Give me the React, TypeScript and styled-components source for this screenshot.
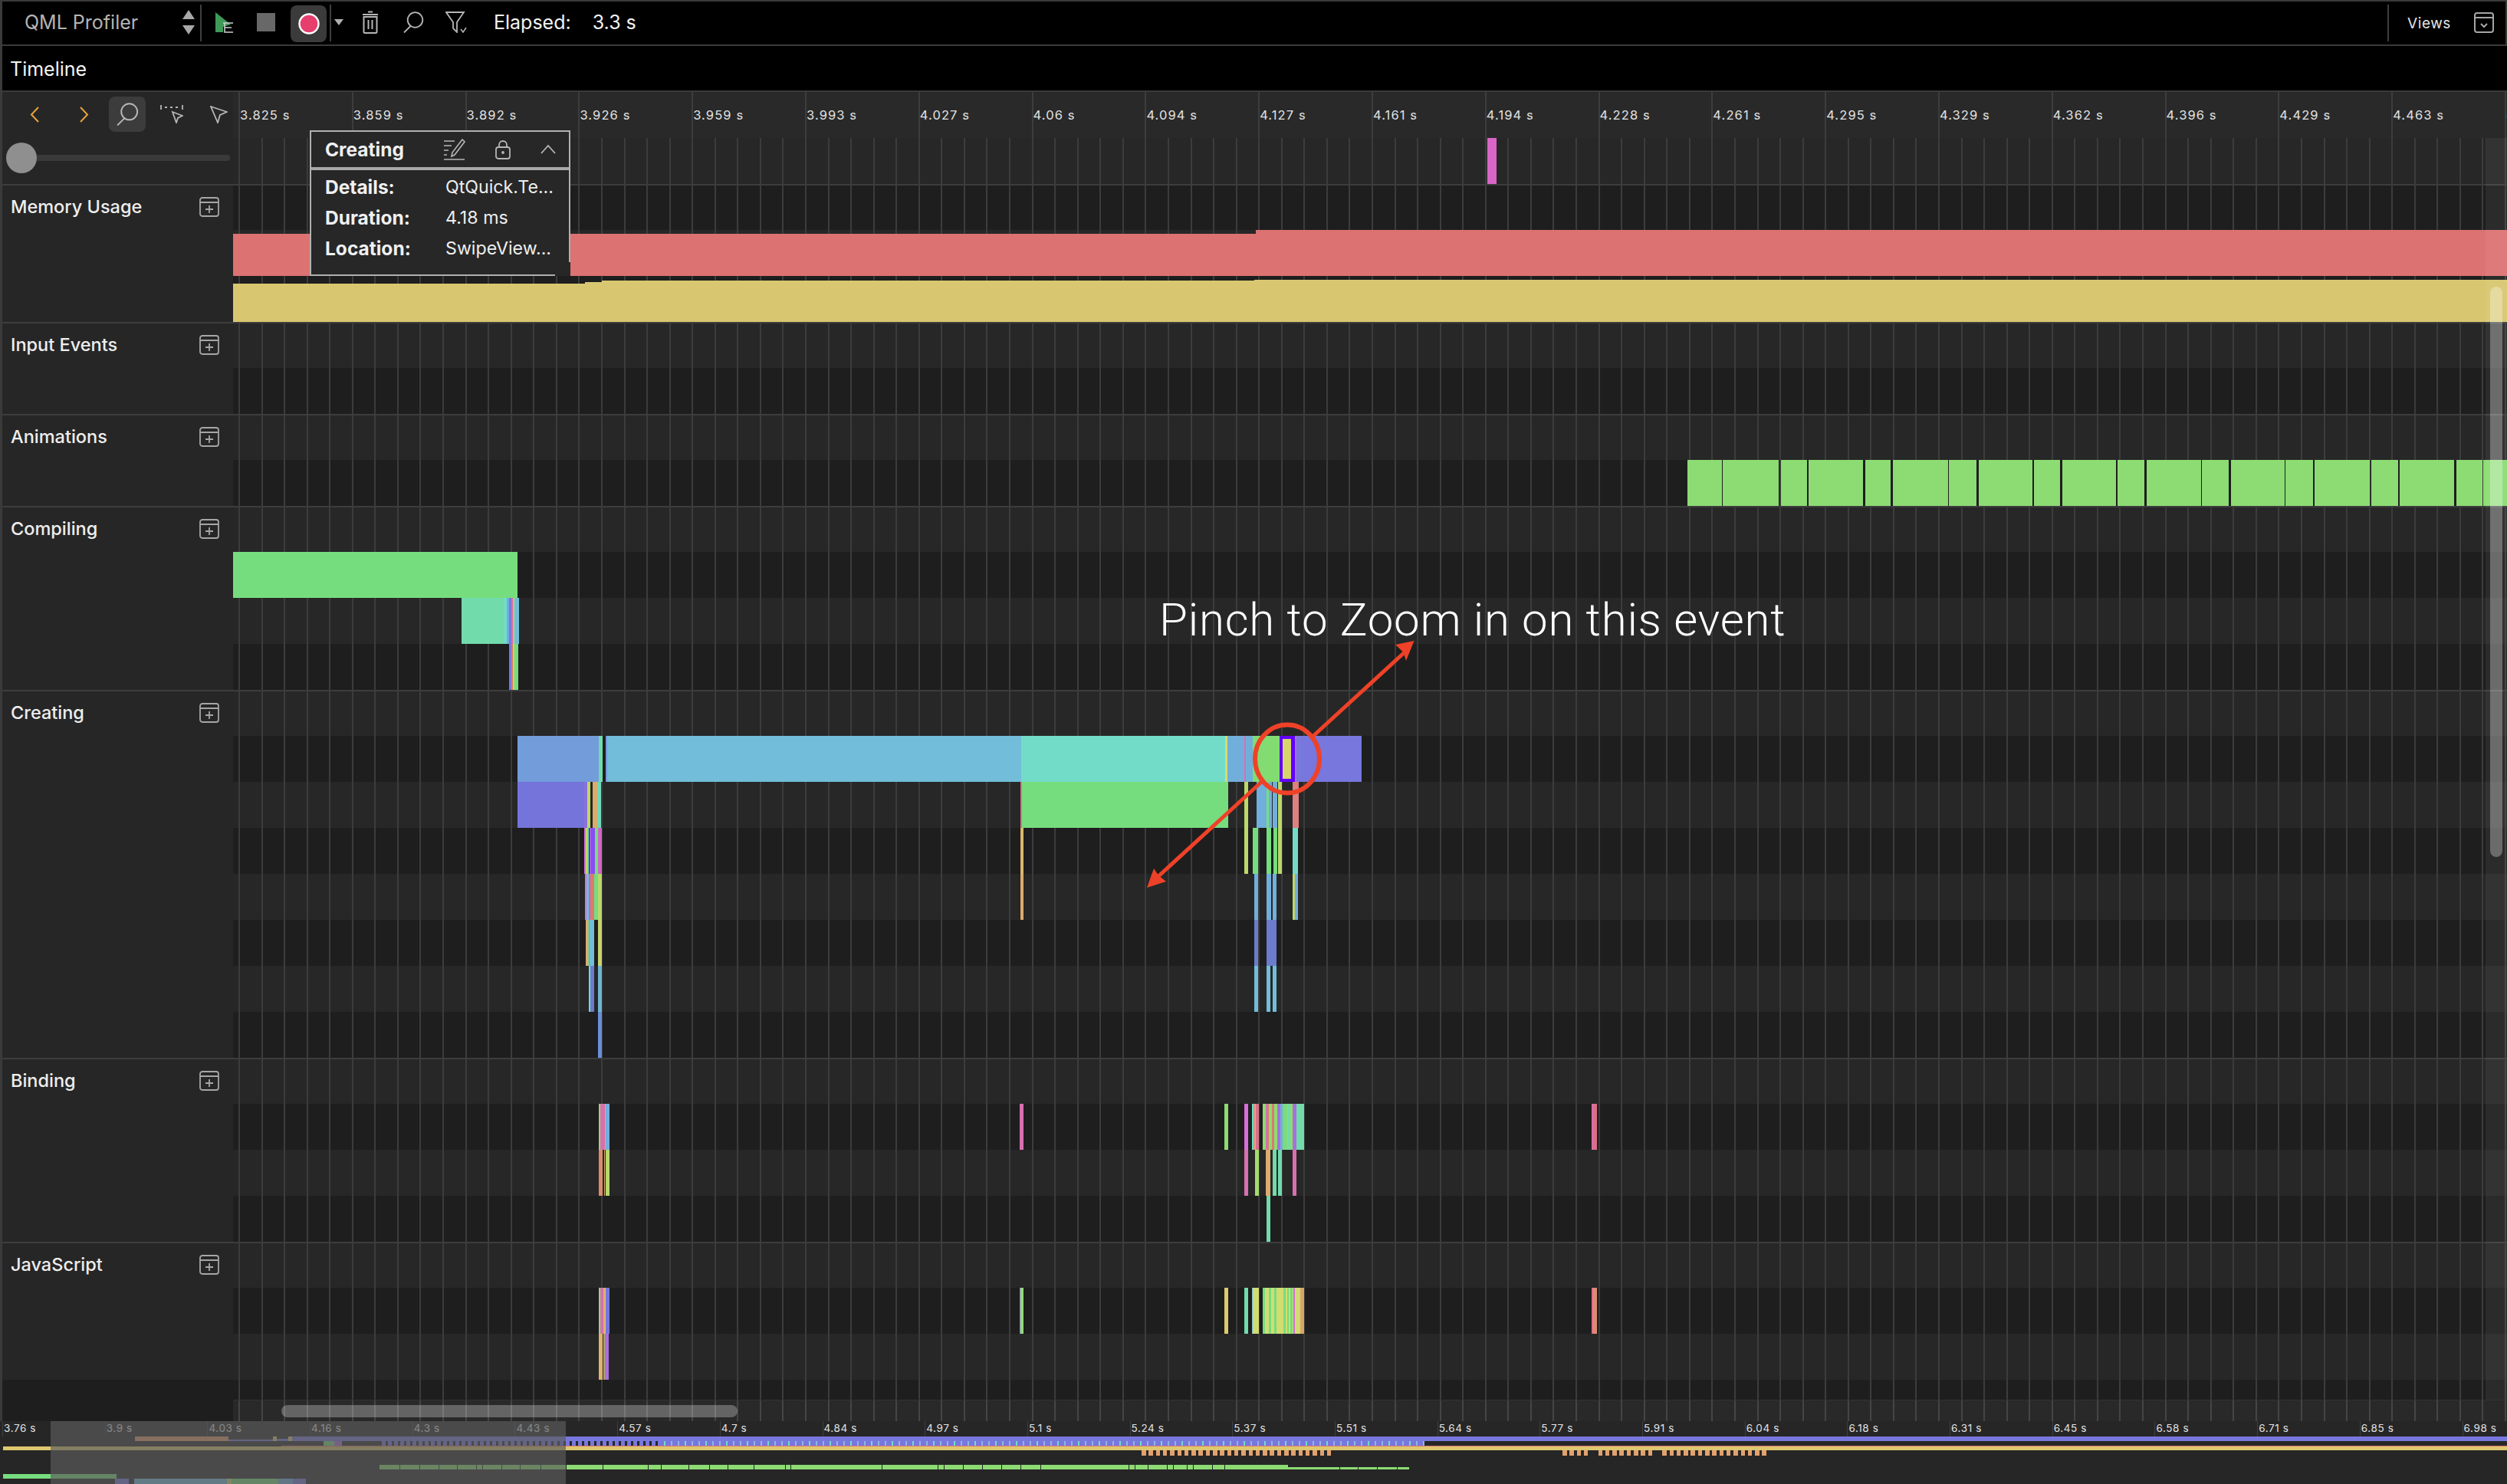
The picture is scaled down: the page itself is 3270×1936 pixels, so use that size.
import styled, { createGlobalStyle } from 'styled-components';

type Bar = { x: number; w: number; y: number; h: number; color: string };
type Span = [number, number, string];

const ROW = 60;

// turns [from, to, colour] spans into bars of one 60px row
const lane = (row: number, spans: Span[]): Bar[] =>
  spans.map(([from, to, color]) => ({ x: from, w: to - from, y: row * ROW, h: ROW, color }));

const C = {
  green: '#76dd7e',
  lime: '#8cdc73',
  mint: '#72dbab',
  teal: '#72dcc8',
  sky: '#72bdd9',
  blue: '#72aedb',
  steel: '#739cda',
  purple: '#7777dd',
  violet: '#a96fdc',
  pink: '#d870b0',
  magenta: '#d86ed8',
  coral: '#dc7a6f',
  rose: '#dc6e8a',
  orange: '#dcac6e',
  yellow: '#d3dc70',
  olive: '#bcd86b',
};

const memoryBars: Bar[] = [
  { x: 304, w: 1334, y: 65, h: 55, color: '#dc7271' },
  { x: 1638, w: 1632, y: 60, h: 60, color: '#dc7271' },
  { x: 304, w: 459, y: 130, h: 50, color: '#d8c770' },
  { x: 763, w: 22, y: 128, h: 52, color: '#d8c770' },
  { x: 785, w: 851, y: 126, h: 54, color: '#d8c770' },
  { x: 1636, w: 1634, y: 125, h: 55, color: '#d8c770' },
];

const animationCuts: [number, number][] = [
  [95, 1], [201, 3], [254, 2], [360, 3], [412, 3], [519, 1], [572, 3], [677, 2], [730, 3], [835, 2],
  [887, 3], [994, 1], [1046, 3], [1151, 1], [1204, 2], [1310, 2], [1363, 2], [1469, 3], [1522, 1],
];

const animationBars: Bar[] = (() => {
  const bars: Bar[] = [];
  let from = 2201;
  animationCuts.forEach(([at, gap]) => {
    const to = 2180 + at / 1.4385;
    bars.push({ x: from, w: to - from, y: ROW, h: ROW, color: C.lime });
    from = to + gap;
  });
  bars.push({ x: from, w: 3270 - from, y: ROW, h: ROW, color: C.lime });
  return bars;
})();

const compilingBars: Bar[] = [
  ...lane(1, [[304, 675, C.green]]),
  ...lane(2, [
    [602, 657, C.mint], [657, 661, C.teal], [661, 664, C.blue], [664, 667, C.purple],
    [667, 669, C.pink], [669, 670, C.orange], [670, 671, C.olive], [671, 677, C.sky],
  ]),
  ...lane(3, [[664, 667, C.purple], [667, 669, C.coral], [669, 671, C.olive], [671, 676, C.green]]),
];

const creatingBars: Bar[] = [
  ...lane(1, [
    [675, 781, C.steel], [781, 786, C.mint], [790, 792, C.steel], [792, 1332, C.sky], [1332, 1598, C.teal],
    [1598, 1601, C.yellow], [1601, 1623, C.blue], [1623, 1625, C.pink], [1625, 1634, C.blue],
    [1634, 1669, '#82dc72'], [1669, 1689, '#6200ff'], [1689, 1691, C.violet], [1691, 1776, C.purple],
  ]),
  { x: 1673, w: 11, y: 64, h: 52, color: '#d8d66b' },
  ...lane(2, [
    [675, 762, '#7474db'], [762, 766, '#8c70d8'], [766, 770, C.olive], [773, 779, '#d9ac6c'], [779, 784, '#6fd9ba'],
    [1332, 1602, C.green], [1331, 1333, C.rose],
    [1623, 1628, C.olive], [1639, 1652, C.blue], [1652, 1655, C.green], [1655, 1659, C.blue], [1660, 1666, C.blue],
    [1667, 1672, C.olive], [1686, 1694, '#dc8080'],
  ]),
  ...lane(3, [
    [762, 764, C.magenta], [764, 766, C.olive], [766, 768, C.teal], [769, 770, C.pink], [770, 776, '#8a4df5'],
    [776, 780, C.green], [780, 785, '#cf66c5'], [1331, 1335, '#d8b86c'],
    [1623, 1628, C.olive], [1634, 1641, C.green], [1652, 1658, C.green], [1661, 1666, C.green], [1667, 1672, C.olive],
    [1686, 1693, C.teal],
  ]),
  ...lane(4, [
    [763, 765, C.magenta], [765, 768, C.sky], [768, 770, C.violet], [770, 775, C.coral], [775, 780, C.green],
    [780, 785, C.olive], [1331, 1335, C.orange], [1636, 1641, C.blue], [1652, 1658, C.blue], [1660, 1665, C.blue],
    [1686, 1689, C.olive], [1689, 1693, C.blue],
  ]),
  ...lane(5, [
    [764, 766, C.orange], [766, 768, C.green], [768, 769, C.magenta], [769, 775, C.sky], [780, 785, '#c8d46c'],
    [1636, 1641, '#6b7ccc'], [1652, 1665, '#6b7ccc'],
  ]),
  ...lane(6, [
    [768, 770, C.teal], [770, 775, '#6b7ccc'], [780, 785, '#6fb5d4'],
    [1636, 1641, C.sky], [1652, 1657, C.sky], [1660, 1665, C.sky],
  ]),
  ...lane(7, [[780, 785, '#6b8fd8']]),
];

const bindingBars: Bar[] = [
  ...lane(1, [
    [781, 783, C.lime], [783, 789, C.pink], [789, 790, C.orange], [790, 795, C.blue], [1330, 1335, C.pink],
    [1597, 1602, C.lime], [1623, 1628, C.magenta], [1633, 1635, C.teal], [1635, 1636, C.pink],
    [1636, 1638, C.orange], [1638, 1642, C.rose], [1647, 1651, C.lime], [1651, 1653, C.pink], [1653, 1655, C.coral],
    [1655, 1659, C.lime], [1659, 1662, C.coral], [1662, 1666, C.lime], [1666, 1670, C.violet], [1670, 1673, C.blue],
    [1673, 1678, C.green], [1678, 1680, C.lime], [1680, 1683, C.mint], [1683, 1686, C.lime], [1686, 1691, C.violet],
    [1691, 1701, C.mint], [2076, 2077, C.magenta], [2077, 2083, C.rose],
  ]),
  ...lane(2, [
    [781, 786, '#dc8c6e'], [787.5, 789, C.orange], [790, 795, '#b5d86a'], [1623, 1628, C.pink], [1637, 1642, '#a6dc6e'],
    [1651, 1657, C.orange], [1660, 1665, C.mint], [1667, 1672, C.mint], [1686, 1691, C.pink],
  ]),
  ...lane(3, [[1652, 1657, C.mint]]),
];

const jsBars: Bar[] = [
  ...lane(1, [
    [781, 783, C.lime], [783, 787, C.pink], [787, 789, C.orange], [789, 790, C.olive], [790, 795, C.purple],
    [1330, 1331, C.violet], [1331, 1335, C.lime], [1597, 1602, '#dccb6e'], [1623, 1628, C.mint], [1633, 1634, C.sky],
    [1634, 1642, C.yellow], [1647, 1650, C.green], [1650, 1655, C.yellow], [1655, 1657.5, C.green],
    [1657.5, 1662, C.yellow], [1662, 1665, C.green], [1665, 1674, C.yellow], [1674, 1677, C.green],
    [1677, 1679, C.yellow], [1679, 1681, C.green], [1681, 1682.5, C.yellow], [1682.5, 1686, C.green],
    [1686, 1687, C.yellow], [1687, 1689, C.magenta], [1689, 1696, C.yellow], [1696, 1701, '#d8a56a'],
    [2076, 2078, C.rose], [2078, 2083, '#dc8c6e'],
  ]),
  ...lane(2, [[781, 786, '#dcb56e'], [787, 789, '#b0a06a'], [789, 794, C.violet]]),
];

const rulerLabels = [
  '3.825', '3.859', '3.892', '3.926', '3.959', '3.993', '4.027', '4.06', '4.094', '4.127', '4.161',
  '4.194', '4.228', '4.261', '4.295', '4.329', '4.362', '4.396', '4.429', '4.463', '4.496',
];

const overviewLabels = [
  '3.76', '3.9', '4.03', '4.16', '4.3', '4.43', '4.57', '4.7', '4.84', '4.97', '5.1', '5.24', '5.37',
  '5.51', '5.64', '5.77', '5.91', '6.04', '6.18', '6.31', '6.45', '6.58', '6.71', '6.85', '6.98',
];

// overview chart, y is counted from its top edge at 1874
const overviewBars: Bar[] = (() => {
  const bars: Bar[] = [
    { x: 176, w: 122, y: 0, h: 6, color: '#e09a6a' },
    { x: 298, w: 58, y: 4, h: 2, color: C.purple },
    { x: 356, w: 5, y: 0, h: 6, color: '#dec86f' },
    { x: 361, w: 15, y: 3, h: 3, color: C.purple },
    { x: 376, w: 5, y: 0, h: 6, color: '#dec86f' },
    { x: 381, w: 2889, y: 0, h: 6, color: C.purple },
    { x: 422, w: 14, y: 6, h: 6, color: C.green },
    { x: 436, w: 10, y: 6, h: 6, color: C.violet },
    { x: 861, w: 996, y: 6, h: 6, color: C.purple },
    { x: 367, w: 2903, y: 12, h: 1, color: '#dc7271' },
    { x: 4, w: 3266, y: 13, h: 5, color: '#dec86f' },
    { x: 4, w: 148, y: 49, h: 6, color: C.green },
    { x: 150, w: 18, y: 55, h: 7, color: C.purple },
    { x: 175, w: 121, y: 55, h: 7, color: C.sky },
    { x: 296, w: 6, y: 55, h: 7, color: C.yellow },
    { x: 302, w: 61, y: 55, h: 7, color: C.green },
    { x: 363, w: 19, y: 55, h: 7, color: C.blue },
    { x: 382, w: 17, y: 55, h: 7, color: C.purple },
    { x: 495, w: 1185, y: 37, h: 6, color: C.lime },
    { x: 1680, w: 158, y: 40, h: 3, color: C.lime },
  ];
  for (let x = 498; x < 861; x += 8) bars.push({ x, w: 5, y: 6, h: 6, color: C.purple });
  let stripe = 0;
  for (let x = 866; x < 1857; x += 9) {
    bars.push({ x, w: 2, y: 6, h: 6, color: stripe % 3 === 0 ? C.teal : '#8fb5e0' });
    stripe += 1;
  }
  const orange = '#e2a16e';
  for (let x = 1489; x < 1738; x += 9.3) bars.push({ x, w: 5.5, y: 18, h: 7, color: orange });
  for (let x = 2038; x < 2300; x += 9.3) {
    if ((x > 2074 && x < 2080) || (x > 2155 && x < 2163)) continue;
    bars.push({ x, w: 5.5, y: 18, h: 7, color: orange });
  }
  [
    521, 547, 572, 596, 621, 629, 654, 678, 705, 738, 786, 845, 862, 898, 925, 949, 983, 1024, 1031, 1150, 1223, 1231,
    1256, 1281, 1306, 1331, 1357, 1472, 1480, 1497, 1522, 1530, 1548, 1556, 1581, 1597, 1747, 1771, 1796, 1822,
  ].forEach((x) => bars.push({ x, w: 1, y: 37, h: 6, color: '#262626' }));
  return bars;
})();

const GlobalStyle = createGlobalStyle`
  html, body {
    margin: 0;
    padding: 0;
    background: #000;
  }
  body {
    font-family: Inter, "Liberation Sans", sans-serif;
    color: #e8e8e8;
  }
`;

const Page = styled.div`
  position: relative;
  width: 3270px;
  height: 1936px;
  overflow: hidden;
  background: #000;
  display: flex;
  flex-direction: column;
`;

const Toolbar = styled.header`
  box-sizing: border-box;
  height: 60px;
  display: flex;
  align-items: center;
  background: #000;
  border-top: 2px solid #3a3a3a;
  border-left: 3px solid #3a3a3a;
  border-right: 2px solid #3a3a3a;
  border-bottom: 2px solid #3a3a3a;
  padding-bottom: 2px;
`;

const ComboText = styled.span`
  margin-left: 29px;
  width: 205px;
  font-size: 25px;
  color: #b4b4b4;
`;

const Divider = styled.span`
  flex: none;
  width: 2px;
  height: 48px;
  margin-top: 2px;
  background: #3e3e3e;
`;

const Cell = styled.span<{ $w: number }>`
  flex: none;
  width: ${(p) => p.$w}px;
  display: flex;
  align-items: center;
  justify-content: center;
`;

const RecordButton = styled.span`
  flex: none;
  width: 47px;
  height: 48px;
  margin: 4px 4px 0 6px;
  border-radius: 8px;
  background: #3b3b3b;
  display: flex;
  align-items: center;
  justify-content: center;
`;

const ElapsedText = styled.span<{ $gap: number }>`
  margin-left: ${(p) => p.$gap}px;
  font-size: 25px;
  color: #f2f2f2;
  white-space: nowrap;
`;

const ToolbarFill = styled.span`
  flex: 1;
`;

const ViewsText = styled.span`
  margin: 2px 30px 0 24px;
  font-size: 19px;
  letter-spacing: 0.6px;
  color: #e4e4e4;
`;

const ViewsIcon = styled.span`
  display: flex;
  margin-right: 15px;
`;

const TitleBar = styled.div`
  box-sizing: border-box;
  height: 60px;
  padding: 2px 0 0 10px;
  display: flex;
  align-items: center;
  background: #000;
  border-left: 3px solid #3a3a3a;
  border-bottom: 2px solid #3a3a3a;
  font-size: 25px;
  color: #f4f4f4;
`;

const Timeline = styled.main`
  flex: none;
  height: 1734px;
  display: flex;
  flex-direction: column;
  box-sizing: border-box;
  border-left: 3px solid #3a3a3a;
`;

const HeaderRow = styled.div`
  flex: none;
  height: 120px;
  display: flex;
`;

const Controls = styled.div`
  flex: none;
  width: 301px;
  background: #262626;
  display: flex;
  flex-direction: column;
`;

const NavRow = styled.div`
  height: 60px;
  display: flex;
  align-items: center;
`;

const NavCell = styled.span<{ $w: number; $active?: boolean }>`
  flex: none;
  width: ${(p) => p.$w}px;
  height: 46px;
  margin-top: -2px;
  display: flex;
  align-items: center;
  justify-content: center;
  border-radius: 8px;
  background: ${(p) => (p.$active ? '#3c3c3c' : 'transparent')};
`;

const SliderRow = styled.div`
  height: 60px;
  padding: 0 0 8px 5px;
  box-sizing: border-box;
  display: flex;
  align-items: center;
`;

const SliderThumb = styled.span`
  flex: none;
  width: 40px;
  height: 40px;
  border-radius: 50%;
  background: #8f8f8f;
`;

const SliderTrack = styled.span`
  flex: none;
  width: 252px;
  height: 8px;
  border-radius: 0 4px 4px 0;
  background: #3a3a3a;
`;

const HeaderRight = styled.div`
  flex: 1;
  min-width: 0;
  display: flex;
  flex-direction: column;
`;

const Ruler = styled.div`
  height: 60px;
  padding-left: 7px;
  display: flex;
  overflow: hidden;
  background: #292929;
`;

const RulerTick = styled.span`
  flex: none;
  box-sizing: border-box;
  width: 147.8px;
  padding: 20px 0 0 0;
  border-left: 2px solid #3d3d3d;
  font-size: 16.5px;
  line-height: 20px;
  letter-spacing: 1.1px;
  white-space: nowrap;
  color: #e2e2e2;
`;

const gridLines =
  'repeating-linear-gradient(90deg, #3c3c3c 7px, #3c3c3c 9px, transparent 9px, transparent 36.56px)';

const Lane = styled.div<{ $startDark?: boolean; $flat?: boolean }>`
  flex: 1;
  min-width: 0;
  background-image: ${gridLines},
    ${(p) =>
      p.$flat
        ? 'linear-gradient(#1e1e1e, #1e1e1e)'
        : p.$startDark
          ? 'repeating-linear-gradient(180deg, #1e1e1e 0 60px, #272727 60px 120px)'
          : 'repeating-linear-gradient(180deg, #272727 0 60px, #1e1e1e 60px 120px)'};
`;

const Chart = styled.svg`
  display: block;
`;

const SectionRow = styled.section<{ $rows: number }>`
  position: relative;
  flex: none;
  height: ${(p) => p.$rows * ROW}px;
  display: flex;

  &::after {
    content: '';
    position: absolute;
    top: 0;
    left: 0;
    right: 0;
    height: 2px;
    background: #3d3d3d;
  }
`;

const SectionHead = styled.div`
  flex: none;
  box-sizing: border-box;
  width: 301px;
  height: 100%;
  background: #262626;
`;

const HeadLine = styled.div`
  box-sizing: border-box;
  height: 60px;
  padding: 0 18px 1px 11px;
  display: flex;
  align-items: center;
  justify-content: space-between;
  font-size: 23.5px;
  font-weight: 500;
  color: #eeeeee;
`;

const BottomRow = styled.div`
  flex: 1;
  display: flex;
  background: #1e1e1e;
`;

const BottomHead = styled.div`
  flex: none;
  width: 301px;
`;

const ScrollLane = styled(Lane)`
  display: flex;
  align-items: flex-end;
`;

const HScrollTrack = styled.div`
  flex: 1;
  height: 28px;
  box-sizing: border-box;
  padding: 6px 0 0 63px;
  background: rgba(255, 255, 255, 0.05);
  border-top: 1px solid #333;
`;

const HScrollThumb = styled.div`
  width: 595px;
  height: 16px;
  border-radius: 8px;
  background: rgba(255, 255, 255, 0.28);
`;

const Overview = styled.footer`
  position: relative;
  flex: 1;
  background: #262626;
  display: flex;
  flex-direction: column;
`;

const OverviewRuler = styled.div`
  height: 20px;
  padding-left: 3px;
  display: flex;
  overflow: hidden;
`;

const OverviewTick = styled.span`
  flex: none;
  box-sizing: border-box;
  width: 133.7px;
  padding-left: 1px;
  border-left: 1px solid #3f3f3f;
  font-size: 13.5px;
  line-height: 19px;
  letter-spacing: 0.6px;
  color: #e4e4e4;
`;

const OverviewWindow = styled.div`
  position: absolute;
  left: 66px;
  top: 0;
  bottom: 0;
  width: 672px;
  background: rgba(91, 91, 91, 0.68);
`;

const VScrollTrack = styled.div`
  position: absolute;
  left: 3242px;
  top: 180px;
  width: 28px;
  height: 1646px;
  padding: 194px 0 0 6px;
  box-sizing: border-box;
  background: rgba(255, 255, 255, 0.06);
`;

const VScrollThumb = styled.div`
  width: 16px;
  height: 744px;
  border-radius: 8px;
  background: rgba(255, 255, 255, 0.3);
`;

const Tooltip = styled.aside`
  position: absolute;
  left: 404px;
  top: 170px;
  box-sizing: border-box;
  width: 340px;
  height: 190px;
  background: #272727;
  border: 2px solid #b0b0b0;

  &::after {
    content: '';
    position: absolute;
    right: -2px;
    bottom: -2px;
    width: 20px;
    height: 18px;
    background: #272727;
  }
`;

const TooltipHead = styled.div`
  box-sizing: border-box;
  height: 50px;
  padding: 0 17px 0 18px;
  display: flex;
  align-items: center;
  border-bottom: 4px solid #a8a8a8;
`;

const TooltipTitle = styled.strong`
  flex: none;
  width: 155px;
  font-size: 24.5px;
  font-weight: 700;
  color: #f0f0f0;
`;

const TooltipTools = styled.div`
  flex: 1;
  display: flex;
  align-items: center;
  justify-content: space-between;
`;

const TooltipBody = styled.dl`
  margin: 0;
  padding: 2px 0 0 18px;
  display: grid;
  grid-template-columns: 157px 1fr;
  grid-auto-rows: 40px;
  align-items: center;
`;

const TooltipKey = styled.dt`
  font-size: 24.5px;
  font-weight: 700;
  color: #f0f0f0;
`;

const TooltipValue = styled.dd`
  margin: 0;
  font-size: 23.2px;
  color: #eeeeee;
  white-space: nowrap;
`;

const Annotation = styled.div`
  position: absolute;
  left: 1512px;
  top: 772px;
  font-family: Roboto, sans-serif;
  font-weight: 300;
  font-size: 60px;
  line-height: 74px;
  letter-spacing: 0.75px;
  color: #ffffff;
  white-space: nowrap;
`;

const ArrowLayer = styled.svg`
  position: absolute;
  left: 1480px;
  top: 820px;
`;

const STROKE = '#b6b6b6';

const ComboArrows = () => (
  <svg width="18" height="36" viewBox="0 0 18 36">
    <path d="M9 2 L17 14 H1 Z M9 34 L17 22 H1 Z" fill="#a8a8a8" />
  </svg>
);

const PlayIcon = () => (
  <svg width="26" height="28" viewBox="0 0 26 28">
    <path d="M2 1 L22 17 L12 20 V27 H2 Z" fill="#3f9a57" />
    <path d="M12 15 H25 M14 15 V27 H25 M14 21 H23" fill="none" stroke="#cfcfcf" strokeWidth="1.6" />
  </svg>
);

const StopIcon = () => (
  <svg width="24" height="24" viewBox="0 0 24 24">
    <rect width="24" height="24" fill="#686868" />
  </svg>
);

const RecordIcon = () => (
  <svg width="28" height="28" viewBox="0 0 28 28">
    <circle cx="14" cy="14" r="12.5" fill="#e63e6d" stroke="#ffffff" strokeWidth="2.4" />
  </svg>
);

const DropArrow = () => (
  <svg width="12" height="8" viewBox="0 0 12 8">
    <path d="M0 0 H12 L6 8 Z" fill="#b0b0b0" />
  </svg>
);

const TrashIcon = () => (
  <svg width="22" height="30" viewBox="0 0 22 30" fill="none" stroke={STROKE} strokeWidth="2">
    <path d="M1 5 H21 M8 1.5 H14 M2.5 8 H19.5 V28 Q19.5 29 18 29 H4 Q2.5 29 2.5 28 Z M8.5 12 V24 M13.5 12 V24" />
  </svg>
);

const SearchIcon = ({ size = 28 }: { size?: number }) => (
  <svg width={size} height={size} viewBox="0 0 28 28" fill="none" stroke={STROKE} strokeWidth="1.8">
    <circle cx="16.5" cy="11" r="9.8" />
    <path d="M10.5 19 L2 27.5" />
  </svg>
);

const FilterIcon = () => (
  <svg width="28" height="28" viewBox="0 0 28 28" fill="none" stroke={STROKE} strokeWidth="1.8">
    <path d="M1 1 H24 L15 14 V27 L10 22 V14 Z" />
    <path d="M20 23 L23 27 L27 21" strokeWidth="1.5" />
  </svg>
);

const ViewsGlyph = () => (
  <svg width="26" height="27" viewBox="0 0 26 27" fill="none" stroke="#a6a6a6" strokeWidth="2">
    <rect x="1" y="1" width="24" height="25" rx="3" />
    <path d="M1 7 H25 M9 15 L13 19 L17 15" />
  </svg>
);

const Chevron = ({ dir }: { dir: 'left' | 'right' }) => (
  <svg width="13" height="21" viewBox="0 0 13 21" fill="none" stroke="#e8a33d" strokeWidth="2">
    <path d={dir === 'left' ? 'M11 1 L2 10.5 L11 20' : 'M2 1 L11 10.5 L2 20'} />
  </svg>
);

const RangeIcon = () => (
  <svg width="30" height="24" viewBox="0 0 30 24" fill="none" stroke={STROKE} strokeWidth="1.8">
    <path d="M1 0 V6 M29 0 V6 M6 3 H9 M13 3 H16 M20 3 H23" />
    <path d="M16 9 L29 14 L23 17 L21 23 Z" />
  </svg>
);

const CursorIcon = () => (
  <svg width="23" height="23" viewBox="0 0 23 23" fill="none" stroke={STROKE} strokeWidth="1.8">
    <path d="M1 1 L22 8 L13 12 L10 22 Z" />
  </svg>
);

const ExpandIcon = () => (
  <svg width="26" height="26" viewBox="0 0 26 26" fill="none" stroke="#a6a6a6" strokeWidth="1.8">
    <rect x="1" y="1" width="24" height="24" rx="3" />
    <path d="M1 7 H25 M13 11 V21 M8 16 H18" />
  </svg>
);

const EditIcon = () => (
  <svg width="28" height="28" viewBox="0 0 28 28" fill="none" stroke={STROKE} strokeWidth="1.6">
    <path d="M0 3 H14 M0 9 H10 M0 15 H6 M0 21 H4 M0 27 H27" />
    <path d="M24 1 L27 4 L14 21 L10 23 L11 18 Z" />
  </svg>
);

const LockIcon = () => (
  <svg width="20" height="25" viewBox="0 0 20 25" fill="none" stroke={STROKE} strokeWidth="1.8">
    <rect x="1" y="9" width="18" height="15" rx="3" />
    <path d="M5 9 V6 A5 5 0 0 1 15 6 V9" />
    <circle cx="10" cy="16" r="1" fill={STROKE} />
  </svg>
);

const CollapseIcon = () => (
  <svg width="20" height="12" viewBox="0 0 20 12" fill="none" stroke={STROKE} strokeWidth="1.8">
    <path d="M1 11 L10 1 L19 11" />
  </svg>
);

const Bars = ({ bars, height }: { bars: Bar[]; height: number }) => (
  <Chart width="2966" height={height} viewBox={`304 0 2966 ${height}`} shapeRendering="crispEdges">
    {bars.map((b, i) => (
      <rect key={i} x={b.x} y={b.y} width={b.w} height={b.h} fill={b.color} />
    ))}
  </Chart>
);

interface SectionProps {
  label: string;
  rows: number;
  bars?: Bar[];
  startDark?: boolean;
}

const Section = ({ label, rows, bars = [], startDark }: SectionProps) => (
  <SectionRow $rows={rows}>
    <SectionHead>
      <HeadLine>
        {label}
        <ExpandIcon />
      </HeadLine>
    </SectionHead>
    <Lane $startDark={startDark}>
      <Bars bars={bars} height={rows * ROW} />
    </Lane>
  </SectionRow>
);

export default function App() {
  return (
    <Page>
      <GlobalStyle />
      <Toolbar>
        <ComboText>QML Profiler</ComboText>
        <ComboArrows />
        <Cell $w={6} />
        <Divider />
        <Cell $w={58}>
          <PlayIcon />
        </Cell>
        <Cell $w={52}>
          <StopIcon />
        </Cell>
        <RecordButton>
          <RecordIcon />
        </RecordButton>
        <Divider />
        <Cell $w={20}>
          <DropArrow />
        </Cell>
        <Cell $w={62}>
          <TrashIcon />
        </Cell>
        <Cell $w={50}>
          <SearchIcon />
        </Cell>
        <Cell $w={61}>
          <FilterIcon />
        </Cell>
        <ElapsedText $gap={19}>Elapsed:</ElapsedText>
        <ElapsedText $gap={28}>3.3 s</ElapsedText>
        <ToolbarFill />
        <Divider />
        <ViewsText>Views</ViewsText>
        <ViewsIcon>
          <ViewsGlyph />
        </ViewsIcon>
      </Toolbar>
      <TitleBar>Timeline</TitleBar>
      <Timeline>
        <HeaderRow>
          <Controls>
            <NavRow>
              <NavCell $w={30} />
              <NavCell $w={24}>
                <Chevron dir="left" />
              </NavCell>
              <NavCell $w={40} />
              <NavCell $w={24}>
                <Chevron dir="right" />
              </NavCell>
              <NavCell $w={21} />
              <NavCell $w={48} $active>
                <SearchIcon size={30} />
              </NavCell>
              <NavCell $w={17} />
              <NavCell $w={34}>
                <RangeIcon />
              </NavCell>
              <NavCell $w={31} />
              <NavCell $w={26}>
                <CursorIcon />
              </NavCell>
            </NavRow>
            <SliderRow>
              <SliderThumb />
              <SliderTrack />
            </SliderRow>
          </Controls>
          <HeaderRight>
            <Ruler>
              {rulerLabels.map((t) => (
                <RulerTick key={t}>{t} s</RulerTick>
              ))}
            </Ruler>
            <Lane>
              <Bars bars={[{ x: 1940, w: 12, y: 0, h: 60, color: '#d965c7' }]} height={60} />
            </Lane>
          </HeaderRight>
        </HeaderRow>
        <Section label="Memory Usage" rows={3} bars={memoryBars} startDark />
        <Section label="Input Events" rows={2} />
        <Section label="Animations" rows={2} bars={animationBars} />
        <Section label="Compiling" rows={4} bars={compilingBars} />
        <Section label="Creating" rows={8} bars={creatingBars} />
        <Section label="Binding" rows={4} bars={bindingBars} />
        <Section label="JavaScript" rows={3} bars={jsBars} />
        <BottomRow>
          <BottomHead />
          <ScrollLane $flat>
            <HScrollTrack>
              <HScrollThumb />
            </HScrollTrack>
          </ScrollLane>
        </BottomRow>
      </Timeline>
      <Overview>
        <OverviewRuler>
          {overviewLabels.map((t) => (
            <OverviewTick key={t}>{t} s</OverviewTick>
          ))}
        </OverviewRuler>
        <Chart width="3270" height="62" viewBox="0 0 3270 62" shapeRendering="crispEdges">
          {overviewBars.map((b, i) => (
            <rect key={i} x={b.x} y={b.y} width={b.w} height={b.h} fill={b.color} />
          ))}
        </Chart>
        <OverviewWindow />
      </Overview>

      <VScrollTrack>
        <VScrollThumb />
      </VScrollTrack>

      <Tooltip>
        <TooltipHead>
          <TooltipTitle>Creating</TooltipTitle>
          <TooltipTools>
            <EditIcon />
            <LockIcon />
            <CollapseIcon />
          </TooltipTools>
        </TooltipHead>
        <TooltipBody>
          <TooltipKey>Details:</TooltipKey>
          <TooltipValue>QtQuick.Te...</TooltipValue>
          <TooltipKey>Duration:</TooltipKey>
          <TooltipValue>4.18 ms</TooltipValue>
          <TooltipKey>Location:</TooltipKey>
          <TooltipValue>SwipeView...</TooltipValue>
        </TooltipBody>
      </Tooltip>

      <Annotation>Pinch to Zoom in on this event</Annotation>
      <ArrowLayer width="390" height="350" viewBox="1480 820 390 350">
        <ellipse cx="1679" cy="990" rx="42" ry="44.5" fill="none" stroke="#ee4228" strokeWidth="6" />
        <path d="M1712 961 L1832 851 M1645.5 1020 L1509 1145" stroke="#ee4228" strokeWidth="5" fill="none" />
        <path d="M1844.5 836 L1834 862 L1830.5 851 L1820 841 Z" fill="#ee4228" />
        <path d="M1496 1158 L1521 1150 L1511 1142 L1505 1133 Z" fill="#ee4228" />
      </ArrowLayer>
    </Page>
  );
}
